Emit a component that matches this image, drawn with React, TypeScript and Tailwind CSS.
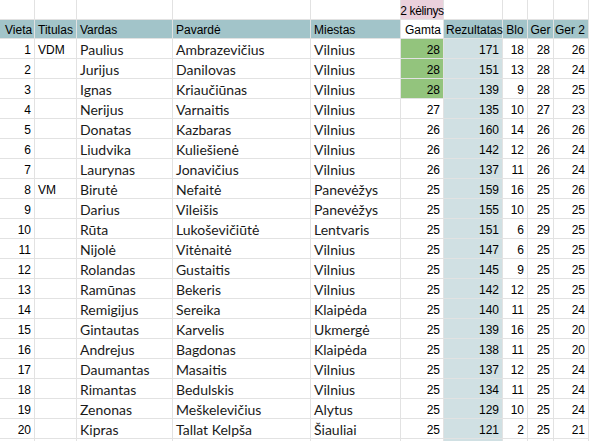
import React from 'react';

type Row = [number, string, string, string, string, number, number, number, number, number];

const rows: Row[] = [
  [1, 'VDM', 'Paulius', 'Ambrazevičius', 'Vilnius', 28, 171, 18, 28, 26],
  [2, '', 'Jurijus', 'Danilovas', 'Vilnius', 28, 151, 13, 28, 24],
  [3, '', 'Ignas', 'Kriaučiūnas', 'Vilnius', 28, 139, 9, 28, 25],
  [4, '', 'Nerijus', 'Varnaitis', 'Vilnius', 27, 135, 10, 27, 23],
  [5, '', 'Donatas', 'Kazbaras', 'Vilnius', 26, 160, 14, 26, 26],
  [6, '', 'Liudvika', 'Kuliešienė', 'Vilnius', 26, 142, 12, 26, 24],
  [7, '', 'Laurynas', 'Jonavičius', 'Vilnius', 26, 137, 11, 26, 24],
  [8, 'VM', 'Birutė', 'Nefaitė', 'Panevėžys', 25, 159, 16, 25, 26],
  [9, '', 'Darius', 'Vileišis', 'Panevėžys', 25, 155, 10, 25, 25],
  [10, '', 'Rūta', 'Lukoševičiūtė', 'Lentvaris', 25, 151, 6, 29, 25],
  [11, '', 'Nijolė', 'Vitėnaitė', 'Vilnius', 25, 147, 6, 25, 25],
  [12, '', 'Rolandas', 'Gustaitis', 'Vilnius', 25, 145, 9, 25, 25],
  [13, '', 'Ramūnas', 'Bekeris', 'Vilnius', 25, 142, 12, 25, 25],
  [14, '', 'Remigijus', 'Sereika', 'Klaipėda', 25, 140, 11, 25, 24],
  [15, '', 'Gintautas', 'Karvelis', 'Ukmergė', 25, 139, 16, 25, 20],
  [16, '', 'Andrejus', 'Bagdonas', 'Klaipėda', 25, 138, 11, 25, 20],
  [17, '', 'Daumantas', 'Masaitis', 'Vilnius', 25, 137, 12, 25, 24],
  [18, '', 'Rimantas', 'Bedulskis', 'Vilnius', 25, 134, 11, 25, 24],
  [19, '', 'Zenonas', 'Meškelevičius', 'Alytus', 25, 129, 10, 25, 24],
  [20, '', 'Kipras', 'Tallat Kelpša', 'Šiauliai', 25, 121, 2, 25, 21],
];

const headers = ['Vieta', 'Titulas', 'Vardas', 'Pavardė', 'Miestas', 'Gamta', 'Rezultatas', 'Blo', 'Ger', 'Ger 2'];

const cell = 'border-r border-b border-[#e2e2e2] flex items-center whitespace-nowrap pt-[2px]';
const arial = "font-['Liberation_Sans',Arial,sans-serif] text-[12px]";
const calibri = "font-['Lato','Noto_Sans',sans-serif] text-[14px] text-[#1a1a1a]";

export default function App() {
  return (
    <div className="w-[590px] h-[441px] overflow-hidden bg-white text-black">
      <div className="grid grid-cols-[35px_42px_96px_138px_90px_43px_59px_25px_26px_35px]">
        {/* top row */}
        {headers.map((h, i) => (
          <div
            key={'t' + h}
            className={`${cell} h-[20px] ${arial} ${i === 5 ? 'bg-[#ead1dc] justify-center' : ''}`}
          >
            {i === 5 ? <span className="tracking-[-0.35px]">2 kėlinys</span> : null}
          </div>
        ))}

        {/* header row */}
        {headers.map((h, i) => (
          <div
            key={h}
            className={`${cell} h-[19px] ${arial} ${i === 5 ? 'bg-white justify-end pr-[2px]' : 'bg-[#a2c4c9]'} ${
              i === 0 ? 'pl-[5px]' : i === 6 ? 'pl-[2px]' : i === 7 || i === 8 ? 'justify-center' : 'pl-[3px]'
            } ${i === 9 ? 'justify-end pr-[3px]' : ''}`}
          >
            {h}
          </div>
        ))}

        {/* data rows */}
        {rows.map((r) => (
          <React.Fragment key={r[0]}>
            <div className={`${cell} h-[20px] ${arial} justify-end pr-[3px]`}>{r[0]}</div>
            <div className={`${cell} h-[20px] ${arial} pl-[3px]`}>{r[1]}</div>
            <div className={`${cell} h-[20px] ${calibri} pl-[3px]`}>{r[2]}</div>
            <div className={`${cell} h-[20px] ${calibri} pl-[3px]`}>{r[3]}</div>
            <div className={`${cell} h-[20px] ${calibri} pl-[3px]`}>{r[4]}</div>
            <div
              className={`${cell} h-[20px] ${arial} justify-end pr-[3px] ${r[0] <= 3 ? 'bg-[#93c47d]' : ''}`}
            >
              {r[5]}
            </div>
            <div className={`${cell} h-[20px] ${arial} justify-end pr-[3px] bg-[#d0e0e3]`}>{r[6]}</div>
            <div className={`${cell} h-[20px] ${arial} justify-end pr-[3px]`}>{r[7]}</div>
            <div className={`${cell} h-[20px] ${arial} justify-end pr-[3px]`}>{r[8]}</div>
            <div className={`${cell} h-[20px] ${arial} justify-end pr-[3px]`}>{r[9]}</div>
          </React.Fragment>
        ))}

        {/* partial row */}
        {headers.map((h, i) => (
          <div key={'p' + h} className={`${cell} h-[20px] ${i === 6 ? 'bg-[#d0e0e3]' : ''}`} />
        ))}
      </div>
    </div>
  );
}
